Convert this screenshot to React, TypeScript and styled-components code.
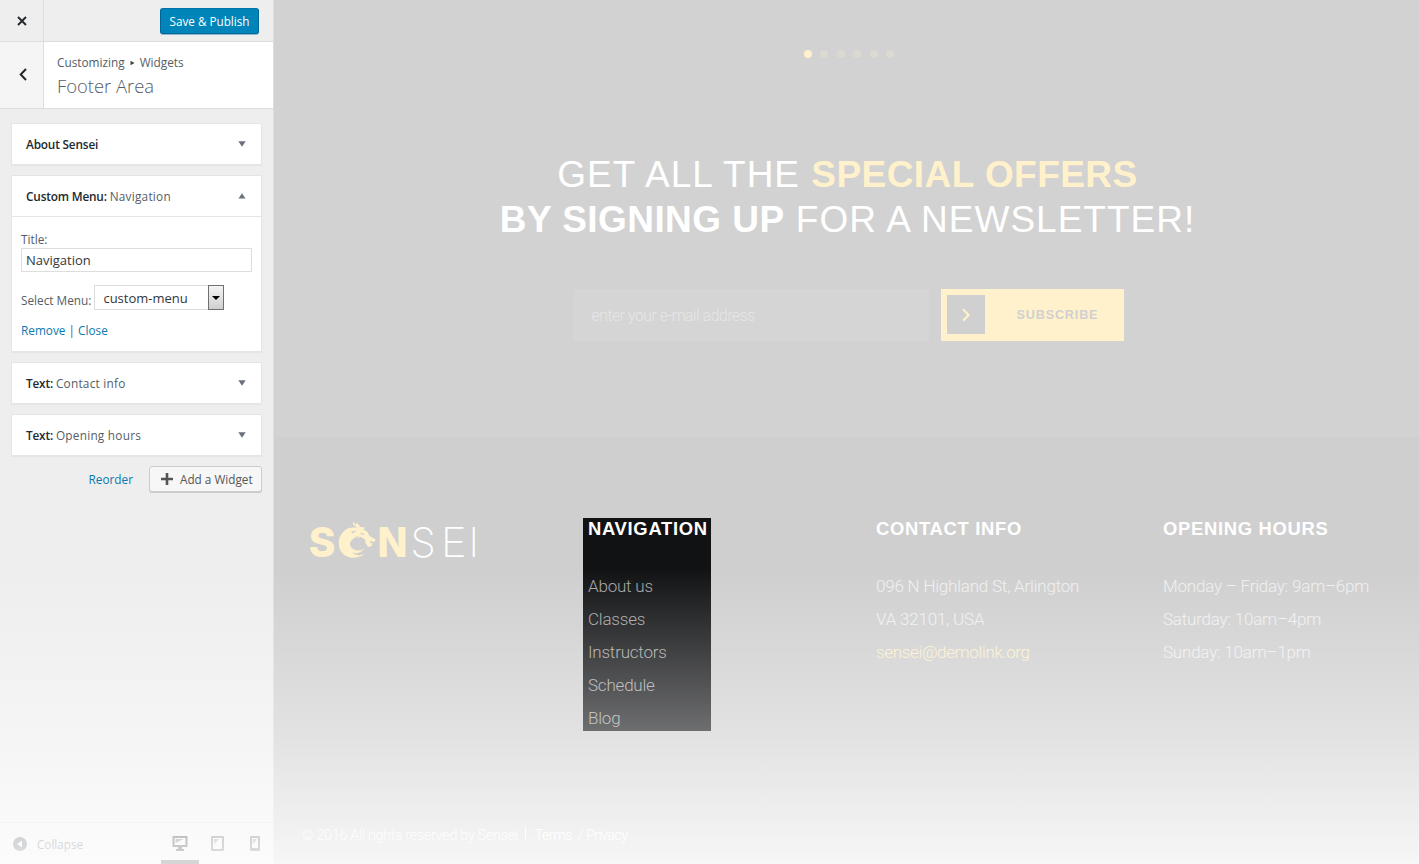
import React from "react";
import styled, { createGlobalStyle } from "styled-components";

const Global = createGlobalStyle`
  *, *::before, *::after { box-sizing: border-box; }
  body { margin: 0; overflow: hidden; }
  ul { list-style: none; margin: 0; padding: 0; }
  h1, h2, h3, p { margin: 0; font-weight: inherit; }
  button, input { font-family: inherit; }
`;

const Page = styled.div`
  position: relative;
  display: flex;
  width: 1419px;
  height: 864px;
  overflow: hidden;
`;

const Fade = styled.div`
  position: absolute;
  inset: 0;
  pointer-events: none;
  background: linear-gradient(to bottom, rgba(255,255,255,0) 568px, rgba(255,255,255,0.39) 731px, rgba(255,255,255,0.82) 864px);
`;

/* ---------- Customizer panel ---------- */

const Sidebar = styled.aside`
  display: flex;
  flex-direction: column;
  width: 274px;
  height: 864px;
  background: #eee;
  border-right: 1px solid #ddd;
  font-family: "Open Sans", sans-serif;
  font-size: 11.8px;
  color: #555d66;
`;

const TopBar = styled.header`
  display: flex;
  justify-content: space-between;
  align-items: center;
  height: 42px;
  padding-right: 14px;
  border-bottom: 1px solid #ddd;
`;

const SquareButton = styled.button<{ $bg: string }>`
  display: flex;
  align-items: center;
  justify-content: center;
  align-self: stretch;
  width: 44px;
  padding: 0;
  border: 0;
  border-right: 1px solid #ddd;
  background: ${(p) => p.$bg};
`;

const PublishButton = styled.button`
  height: 26px;
  width: 99px;
  padding: 1px 0 0;
  border: 1px solid #006799;
  border-top-color: #0073aa;
  border-radius: 3px;
  background: #0085ba;
  color: #fff;
  font-size: 11.7px;
  box-shadow: 0 1px 0 #00679966;
`;

const SectionHead = styled.div`
  display: flex;
  height: 67px;
  background: #fff;
  border-bottom: 1px solid #ddd;
`;

const SectionTitle = styled.div`
  padding: 11px 0 0 13px;
`;

const Crumb = styled.p`
  display: flex;
  align-items: center;
  gap: 5px;
  line-height: 19px;
`;

const SectionName = styled.h2`
  font-size: 18.4px;
  font-weight: 300;
  line-height: 28px;
`;

const WidgetList = styled.div`
  display: flex;
  flex-direction: column;
  gap: 10px;
  padding: 14px 11px 0;
`;

const Widget = styled.section`
  background: #fff;
  border: 1px solid #e5e5e5;
  box-shadow: 0 1px 1px rgba(0, 0, 0, 0.03);
`;

const WidgetHead = styled.div<{ $open?: boolean }>`
  display: flex;
  align-items: center;
  justify-content: space-between;
  height: ${(p) => (p.$open ? 41 : 40)}px;
  padding: 0 15px 1px 14px;
  border-bottom: ${(p) => (p.$open ? "1px solid #e5e5e5" : "0")};
  font-weight: 600;
  letter-spacing: -0.17px;
  color: #23282d;

  span { font-weight: 500; letter-spacing: 0.25px; color: #555d66; }
`;

const WidgetBody = styled.div`
  height: 134px;
  padding: 14px 9px 0;
`;

const FieldLabel = styled.label`
  display: block;
  padding-bottom: 1px;
  line-height: 16px;
`;

const TextInput = styled.input`
  display: block;
  width: 231px;
  height: 24px;
  padding: 0 4px;
  border: 1px solid #ddd;
  background: #fff;
  color: #32373c;
  font-size: 13px;
`;

const SelectRow = styled.div`
  display: flex;
  align-items: flex-start;
  gap: 3px;
  margin-top: 13px;
  line-height: 30px;
`;

const Select = styled.div`
  display: flex;
  justify-content: space-between;
  width: 130px;
  height: 25px;
  padding-left: 8px;
  border: 1px solid #ddd;
  color: #32373c;
  font-size: 13px;
  line-height: 25px;
`;

const SelectArrow = styled.div`
  display: flex;
  align-items: center;
  justify-content: center;
  width: 16px;
  margin: -1px -1px -1px 0;
  border: 1px solid #707070;
  background: linear-gradient(#f3f3f3, #d0d0d0);
`;

const Link = styled.a`
  color: #0a7ab0;
`;

const Actions = styled.p`
  margin-top: 6px;
  line-height: 18px;
`;

const ListFooter = styled.div`
  display: flex;
  align-items: center;
  justify-content: flex-end;
  gap: 16px;
  padding: 10px 11px 0;
`;

const AddButton = styled.button`
  display: flex;
  align-items: center;
  gap: 7px;
  width: 113px;
  height: 26px;
  padding: 0 0 0 11px;
  border: 1px solid #ccc;
  border-radius: 3px;
  background: #f7f7f7;
  box-shadow: 0 1px 0 #ccc;
  color: #555;
  font-size: 11.75px;
  white-space: nowrap;
`;

const BottomBar = styled.footer`
  display: flex;
  align-items: center;
  justify-content: space-between;
  height: 42px;
  margin-top: auto;
  padding-left: 13px;
  border-top: 1px solid #ddd;
`;

const Collapse = styled.div`
  display: flex;
  align-items: center;
  gap: 10px;
  font-size: 11.7px;
`;

const Devices = styled.div`
  display: flex;
  align-self: stretch;
`;

const Device = styled.div<{ $active?: boolean }>`
  display: flex;
  align-items: center;
  justify-content: center;
  width: ${(p) => (p.$active ? 38 : 37)}px;
  padding-top: ${(p) => (p.$active ? 4 : 0)}px;
  border-bottom: ${(p) => (p.$active ? "4px solid #191e23" : "0")};
`;

/* ---------- Site preview ---------- */

const Preview = styled.main`
  display: flex;
  flex-direction: column;
  flex: 1;
  background: #d2d2d2;
  color: #fff;
  font-family: "Liberation Sans", Arial, sans-serif;
`;

const Newsletter = styled.section`
  display: flex;
  flex-direction: column;
  align-items: center;
  height: 437px;
  padding-top: 50px;
`;

const Dots = styled.div`
  display: flex;
  gap: 8.5px;
  padding-left: 5px;
`;

const Dot = styled.i<{ $on?: boolean }>`
  width: 8px;
  height: 8px;
  border-radius: 50%;
  background: ${(p) => (p.$on ? "#fff1cb" : "#dcd9d0")};
`;

const Headline = styled.h1`
  margin-top: 94px;
  padding-left: 2px;
  font-size: 37px;
  letter-spacing: 1px;
  line-height: 45px;
  text-align: center;
  white-space: nowrap;

  b { letter-spacing: 0.45px; }
`;

const Gold = styled.b`
  color: #fff1cb;
`;

const Form = styled.div`
  display: flex;
  gap: 12px;
  margin-top: 47px;
  padding-left: 3px;
`;

const Email = styled.div`
  width: 356px;
  height: 52px;
  padding-left: 19px;
  background: #d5d5d5;
  color: #e6e6e6;
  font: 300 15.6px/54px Roboto, sans-serif;
  letter-spacing: -0.37px;
`;

const Subscribe = styled.div`
  display: flex;
  align-items: center;
  width: 183px;
  height: 52px;
  padding: 0 6px 1px;
  background: #fff1cb;
  color: #d0d0d0;
  font-size: 12.6px;
  font-weight: 700;
  letter-spacing: 0.85px;
`;

const ArrowBox = styled.div`
  display: flex;
  align-items: center;
  justify-content: center;
  width: 38px;
  height: 39px;
  margin-right: 32px;
  background: #d0d0d0;
`;

const Footer = styled.section`
  display: flex;
  flex-direction: column;
  flex: 1;
  padding-top: 81px;
  background: #cfcfcf;
`;

const Columns = styled.div`
  display: grid;
  grid-template-columns: 309px 293px 287px 1fr;
  height: 213px;
`;

const LogoBox = styled.div`
  padding-left: 26px;
`;

const Column = styled.div<{ $active?: boolean }>`
  width: ${(p) => (p.$active ? "128px" : "auto")};
  height: 213px;
  padding-left: ${(p) => (p.$active ? 5 : 0)}px;
  background: ${(p) => (p.$active ? "#111214" : "transparent")};
  color: ${(p) => (p.$active ? "#a5a5a5" : "#f0f0f0")};
  font: 300 17px/33px Roboto, sans-serif;
  letter-spacing: -0.21px;
  white-space: nowrap;
`;

const ColumnTitle = styled.h3`
  margin-bottom: 31px;
  color: #fff;
  font: 700 18.4px/21px "Liberation Sans", Arial, sans-serif;
  letter-spacing: 0.7px;
`;

const Mail = styled.span`
  color: #fdefca;
  letter-spacing: -0.35px;
`;

const Copyright = styled.p`
  display: flex;
  align-items: center;
  margin-top: auto;
  padding: 0 0 19px 28px;
  color: #f8f8f8;
  font: 300 14.3px/20px Roboto, sans-serif;
  letter-spacing: -0.26px;
  white-space: pre;

  b { font-weight: 300; letter-spacing: -0.55px; color: #fff; }
`;

const Divider = styled.i`
  width: 1px;
  height: 13px;
  margin: 0 9px 4px 7px;
  background: #fff;
`;

const Triangle = ({ up }: { up?: boolean }) => (
  <svg width="8" height="6" viewBox="0 0 8 6">
    <path d={up ? "M0.5 5.5 4 0.3 7.5 5.5Z" : "M0.3 0.3H7.7L4 5.7Z"} fill="#6b7178" />
  </svg>
);

const LogoSvg = styled.svg`
  display: block;
  overflow: visible;
`;

const Logo = () => (
  <LogoSvg width="190" height="60" viewBox="300 518 190 60">
    <g fontFamily="Inter, sans-serif" fontSize="40.5">
      <text x="308.8" y="557" fontWeight="800" fill="#fff1cb">S</text>
      <text x="377.5" y="557" fontWeight="800" fill="#fff1cb" textLength="30" lengthAdjust="spacingAndGlyphs">N</text>
      <text x="410.5" y="557" fontWeight="250" fill="#fff">S</text>
      <text x="440.7" y="557" fontWeight="250" fill="#fff" textLength="26" lengthAdjust="spacingAndGlyphs">E</text>
      <text x="468.5" y="557" fontWeight="250" fill="#fff">I</text>
    </g>
    <path
      fill="#fff1cb"
      d="M353 521.500 L356 525 356.500 522.500 360.500 527 365 527.500 363.500 529.500 367.500 532 369.500 536 375.500 539.500 374.500 542 371 541 369.500 542.500 372.500 543.500 371.500 546 368 547 365.500 543 365 539.500 360 536.500 357.500 538.500 358 535.500 354.500 538 C349 541 348.500 546 353 549 C357 551.500 361 551 365 548 C362 552 358 554.500 352 552.500 C356 556 361 555.500 364.500 554 C356 560.500 344 558.500 340 549.500 C336 538 343 528 352.500 527.500 L357 527.500 C355 525.500 353.500 525 353 524Z"
    />
    <path d="M360 532.500 L365 534.300 362 535Z M351 531.500 357 530.500 352.500 533.500Z" fill="#cfcfcf" />
  </LogoSvg>
);

const nav = ["About us", "Classes", "Instructors", "Schedule", "Blog"];
const hours = ["Monday – Friday: 9am–6pm", "Saturday: 10am–4pm", "Sunday: 10am–1pm"];

export default function App() {
  return (
    <Page>
      <Global />
      <Sidebar>
        <TopBar>
          <SquareButton $bg="#eee" aria-label="Close">
            <svg width="10" height="11" viewBox="0 -1 10 11">
              <path d="M1 1 9 9M9 1 1 9" stroke="#23282d" strokeWidth="1.9" />
            </svg>
          </SquareButton>
          <PublishButton>Save &amp; Publish</PublishButton>
        </TopBar>
        <SectionHead>
          <SquareButton $bg="#f5f5f5" aria-label="Back">
            <svg width="11" height="15" viewBox="-3 0 11 15">
              <path d="M7 1 1.700 6.500 7 12" fill="none" stroke="#23282d" strokeWidth="2" />
            </svg>
          </SquareButton>
          <SectionTitle>
            <Crumb>
              Customizing
              <svg width="5" height="6" viewBox="0 0 5 6">
                <path d="M0.500 0.800V5.200L4.500 3Z" fill="#444" />
              </svg>
              Widgets
            </Crumb>
            <SectionName>Footer Area</SectionName>
          </SectionTitle>
        </SectionHead>
        <WidgetList>
          <Widget>
            <WidgetHead>About Sensei<Triangle /></WidgetHead>
          </Widget>
          <Widget>
            <WidgetHead $open>
              <div>Custom Menu: <span>Navigation</span></div>
              <Triangle up />
            </WidgetHead>
            <WidgetBody>
              <FieldLabel>Title:</FieldLabel>
              <TextInput defaultValue="Navigation" />
              <SelectRow>
                Select Menu:
                <Select>
                  custom-menu
                  <SelectArrow>
                    <svg width="8" height="4" viewBox="0 0 8 4">
                      <path d="M0 0H8L4 4Z" fill="#000" />
                    </svg>
                  </SelectArrow>
                </Select>
              </SelectRow>
              <Actions><Link>Remove</Link> | <Link>Close</Link></Actions>
            </WidgetBody>
          </Widget>
          <Widget>
            <WidgetHead><div>Text: <span>Contact info</span></div><Triangle /></WidgetHead>
          </Widget>
          <Widget>
            <WidgetHead><div>Text: <span>Opening hours</span></div><Triangle /></WidgetHead>
          </Widget>
        </WidgetList>
        <ListFooter>
          <Link>Reorder</Link>
          <AddButton>
            <svg width="12" height="12" viewBox="0 0 12 12">
              <path d="M6 0V12M0 6H12" stroke="#555" strokeWidth="2.6" />
            </svg>
            Add a Widget
          </AddButton>
        </ListFooter>
        <BottomBar>
          <Collapse>
            <svg width="14" height="14" viewBox="0 0 14 14">
              <circle cx="7" cy="7" r="7" fill="#555d66" />
              <path d="M9 3.500V10.500L3.800 7Z" fill="#eee" />
            </svg>
            Collapse
          </Collapse>
          <Devices>
            <Device $active>
              <svg width="16" height="15" viewBox="0 0 16 15">
                <path fillRule="evenodd" d="M.5 0H15.500V11H10V13H12V15H4V13H6V11H.5ZM2.500 2V9H13.500V2Z" fill="#191e23" />
                <path d="M3.500 3H11.500L3.500 7Z" fill="#191e23" opacity=".7" />
              </svg>
            </Device>
            <Device>
              <svg width="13" height="15" viewBox="0 0 13 15">
                <path fillRule="evenodd" d="M1 0H12Q13 0 13 1V14Q13 15 12 15H1Q0 15 0 14V1Q0 0 1 0ZM2 2V13H11V2Z" fill="#555d66" />
                <path d="M3 3H8L3 8Z" fill="#555d66" opacity=".7" />
              </svg>
            </Device>
            <Device>
              <svg width="10" height="15" viewBox="0 0 10 15">
                <path fillRule="evenodd" d="M1 0H9Q10 0 10 1V14Q10 15 9 15H1Q0 15 0 14V1Q0 0 1 0ZM2 2V12H8V2Z" fill="#555d66" />
                <path d="M3 3H7L3 8Z" fill="#555d66" opacity=".7" />
              </svg>
            </Device>
          </Devices>
        </BottomBar>
      </Sidebar>
      <Preview>
        <Newsletter>
          <Dots>
            <Dot $on /><Dot /><Dot /><Dot /><Dot /><Dot />
          </Dots>
          <Headline>
            GET ALL THE <Gold>SPECIAL OFFERS</Gold>
            <br />
            <b>BY SIGNING UP</b> FOR A NEWSLETTER!
          </Headline>
          <Form>
            <Email>enter your e-mail address</Email>
            <Subscribe>
              <ArrowBox>
                <svg width="8" height="14" viewBox="0 0 8 14">
                  <path d="M1 1.200 6.500 7 1 12.800" fill="none" stroke="#fff1cb" strokeWidth="2.2" />
                </svg>
              </ArrowBox>
              SUBSCRIBE
            </Subscribe>
          </Form>
        </Newsletter>
        <Footer>
          <Columns>
            <LogoBox><Logo /></LogoBox>
            <Column $active>
              <ColumnTitle>NAVIGATION</ColumnTitle>
              <ul>{nav.map((n) => <li key={n}>{n}</li>)}</ul>
            </Column>
            <Column>
              <ColumnTitle>CONTACT INFO</ColumnTitle>
              <p>096 N Highland St, Arlington</p>
              <p>VA 32101, USA</p>
              <Mail>sensei@demolink.org</Mail>
            </Column>
            <Column>
              <ColumnTitle>OPENING HOURS</ColumnTitle>
              {hours.map((h) => <p key={h}>{h}</p>)}
            </Column>
          </Columns>
          <Copyright>
            © 2016 All rights reserved by Sensei<Divider /><b>Terms  / Privacy</b>
          </Copyright>
        </Footer>
      </Preview>
      <Fade />
    </Page>
  );
}
